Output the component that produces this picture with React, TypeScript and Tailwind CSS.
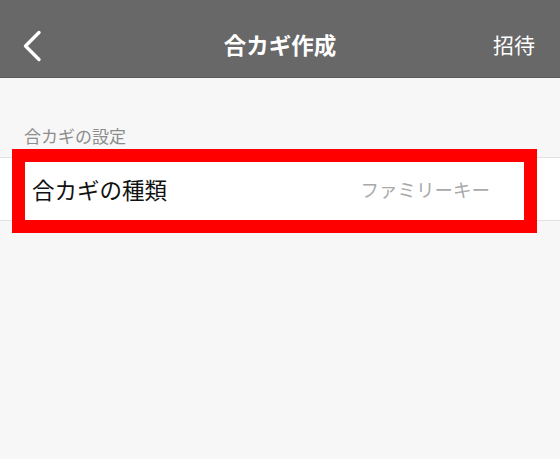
import React from "react";

export default function App() {
  const font = { fontFamily: '"Noto Sans CJK JP", "Noto Sans", sans-serif' };
  return (
    <div className="w-[560px] h-[459px] bg-[#f7f7f7] overflow-hidden" style={font}>
      <div className="h-[78px] pt-[12px] bg-[#686868] border-b border-[#5a5a5a] grid grid-cols-[1fr_auto_1fr] items-center">
        <div className="pl-[22px] flex items-center">
          <svg width="22" height="32" viewBox="0 0 22 32" fill="none" className="mt-[3px]">
            <path d="M17 2.5 L3.5 16 L17 29.5" stroke="white" strokeWidth="3.4" strokeLinecap="round" strokeLinejoin="round" />
          </svg>
        </div>
        <div className="text-white text-[22.5px] font-bold leading-none">合カギ作成</div>
        <div className="flex justify-end pr-[25px] text-white text-[21px] leading-none">招待</div>
      </div>
      <div className="pt-[46px] pl-[24px] text-[17px] leading-[24px] text-[#8c8c8c]">合カギの設定</div>
      <div className="relative mt-[9px] h-[64px] bg-white border-y border-[#e2e2e2] flex items-center justify-between pl-[32px] pr-[70px]">
        <span className="text-[22.5px] text-[#111] leading-none">合カギの種類</span>
        <span className="text-[18.5px] text-[#a9a9a9] leading-none">ファミリーキー</span>
        <div className="absolute left-[12px] top-[-9px] w-[525px] h-[84px] border-[13px] border-[#ff0000]"></div>
      </div>
    </div>
  );
}
